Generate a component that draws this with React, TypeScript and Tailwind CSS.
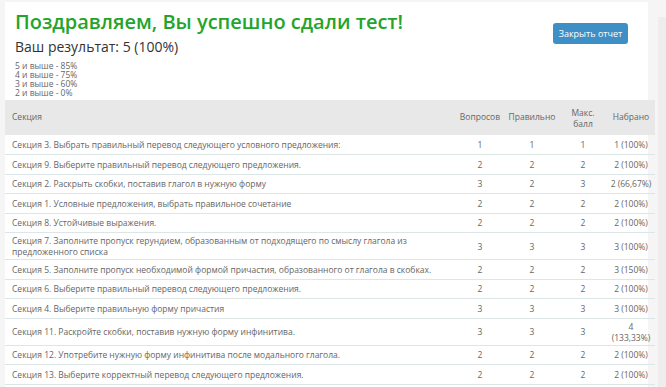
import { memo } from 'react'

type Row = { title: string; q: number; ok: number; max: number; got: string[]; tall?: boolean }

const rows: Row[] = [
    { title: 'Секция 3. Выбрать правильный перевод следующего условного предложения:', q: 1, ok: 1, max: 1, got: ['1 (100%)'] },
    { title: 'Секция 9. Выберите правильный перевод следующего предложения.', q: 2, ok: 2, max: 2, got: ['2 (100%)'] },
    { title: 'Секция 2. Раскрыть скобки, поставив глагол в нужную форму', q: 3, ok: 2, max: 3, got: ['2 (66,67%)'] },
    { title: 'Секция 1. Условные предложения, выбрать правильное сочетание', q: 2, ok: 2, max: 2, got: ['2 (100%)'] },
    { title: 'Секция 8. Устойчивые выражения.', q: 2, ok: 2, max: 2, got: ['2 (100%)'] },
    { title: 'Секция 7. Заполните пропуск герундием, образованным от подходящего по смыслу глагола из предложенного списка', q: 3, ok: 3, max: 3, got: ['3 (100%)'], tall: true },
    { title: 'Секция 5. Заполните пропуск необходимой формой причастия, образованного от глагола в скобках.', q: 2, ok: 2, max: 2, got: ['3 (150%)'] },
    { title: 'Секция 6. Выберите правильный перевод следующего предложения.', q: 2, ok: 2, max: 2, got: ['2 (100%)'] },
    { title: 'Секция 4. Выберите правильную форму причастия', q: 3, ok: 3, max: 3, got: ['3 (100%)'] },
    { title: 'Секция 11. Раскройте скобки, поставив нужную форму инфинитива.', q: 3, ok: 3, max: 3, got: ['4', '(133,33%)'], tall: true },
    { title: 'Секция 12. Употребите нужную форму инфинитива после модального глагола.', q: 2, ok: 2, max: 2, got: ['2 (100%)'] },
    { title: 'Секция 13. Выберите корректный перевод следующего предложения.', q: 2, ok: 2, max: 2, got: ['2 (100%)'] },
]

const scores = ['5 и выше - 85%', '4 и выше - 75%', '3 и выше - 60%', '2 и выше - 0%']

export default memo(function App() {
    return (
        <div className="flex h-[387px] w-[666px] overflow-hidden bg-[#f5f5f5] font-['Open_Sans',sans-serif]">
            <div className="ml-[5px] mt-[2px] w-[643px] shrink-0 bg-white">
                <div className="flex justify-between pl-[10px] pr-[20px] pt-[7px]">
                    <div>
                        <h1 className="text-[20px] font-semibold leading-[26px] text-[#24a52a]">Поздравляем, Вы успешно сдали тест!</h1>
                        <div className="mt-[2px] text-[14px] leading-[20px] text-[#333]">Ваш результат: 5 (100%)</div>
                        <div className="mt-[4px] text-[8.5px] leading-[9px] text-[#666]">
                            {scores.map((s) => (
                                <div key={s}>{s}</div>
                            ))}
                        </div>
                    </div>
                    <button className="mt-[14px] h-[21px] w-[75px] rounded-[3px] bg-[#3d8fc5] text-[9px] text-white">Закрыть отчет</button>
                </div>
                <table className="mt-[3px] w-[650px] table-fixed border-collapse text-[8.5px] text-[#666]">
                    <colgroup>
                        <col className="w-[450px]" />
                        <col className="w-[50px]" />
                        <col className="w-[54px]" />
                        <col className="w-[48px]" />
                        <col />
                    </colgroup>
                    <thead>
                        <tr className="h-[35px] bg-[#e8e8e8]">
                            <th className="pl-[7px] text-left font-normal">Секция</th>
                            <th className="font-normal">Вопросов</th>
                            <th className="font-normal">Правильно</th>
                            <th className="font-normal leading-[11px]">Макс.<br />балл</th>
                            <th className="font-normal">Набрано</th>
                        </tr>
                    </thead>
                    <tbody>
                        {rows.map((r) => (
                            <tr key={r.title} className={`border-b border-[#dde6e6] leading-[11px] ${r.tall ? 'h-[27px]' : 'h-[19.5px]'}`}>
                                <td className="py-[2px] pl-[7px] pr-[4px]">{r.title}</td>
                                <td className="text-center">{r.q}</td>
                                <td className="text-center">{r.ok}</td>
                                <td className="text-center">{r.max}</td>
                                <td className="px-[1px] text-center">
                                    {r.got.map((g) => (
                                        <div key={g}>{g}</div>
                                    ))}
                                </td>
                            </tr>
                        ))}
                    </tbody>
                </table>
            </div>
            <div className="ml-[10px] mt-[17px] w-[8px] bg-[#ededed]" />
        </div>
    )
})
